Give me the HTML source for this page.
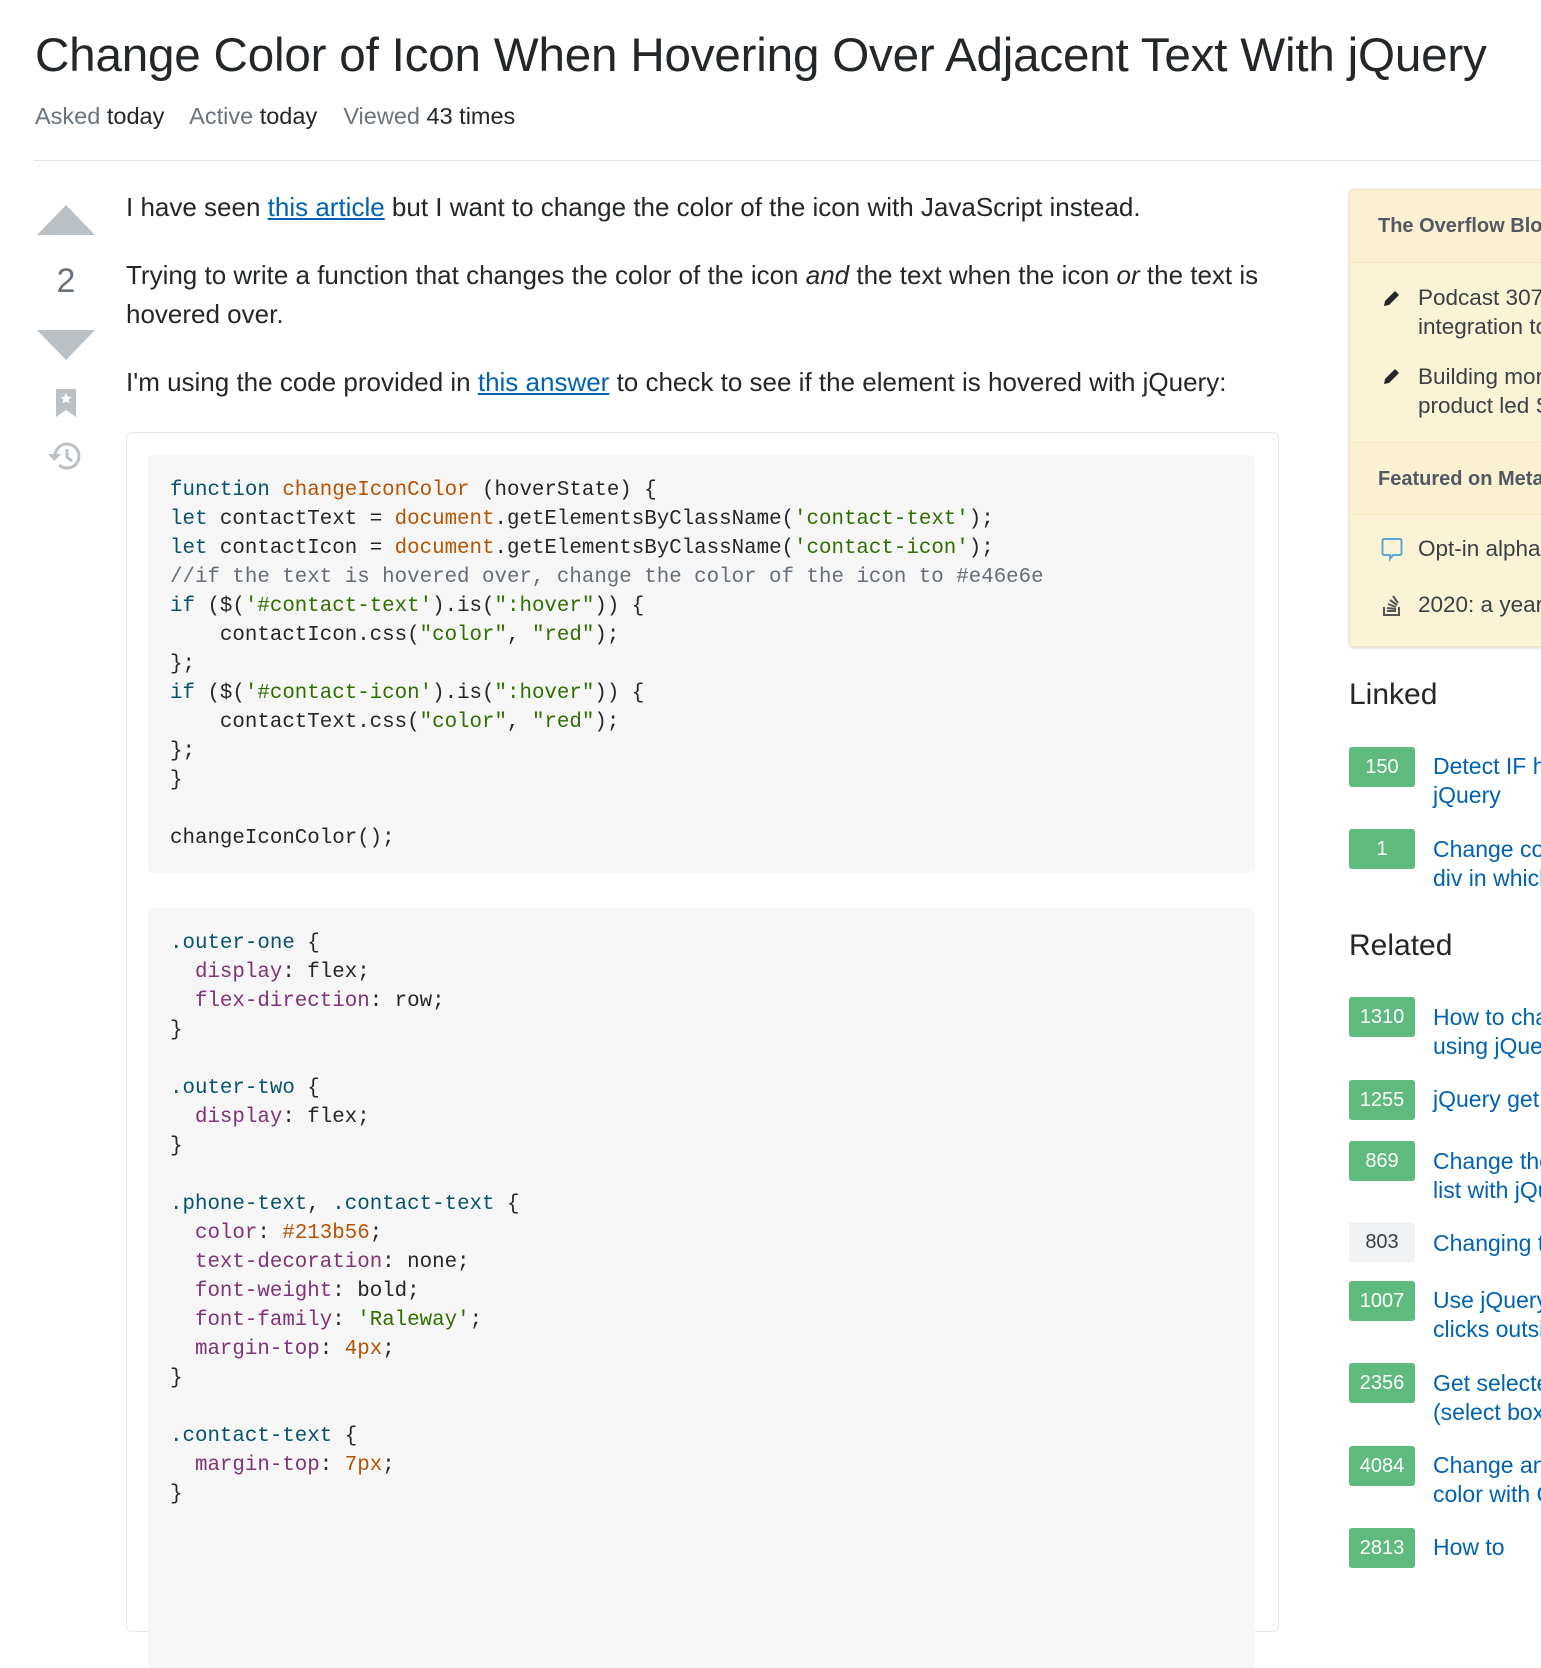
<!DOCTYPE html>
<html><head><meta charset="utf-8"><style>
*{margin:0;padding:0;box-sizing:border-box}
body{width:1541px;height:1541px;overflow:hidden;background:#fff;font-family:"Liberation Sans",Arial,sans-serif;color:#242729;position:relative}
.abs{position:absolute}
h1{position:absolute;left:35px;top:28px;font-size:47.6px;font-weight:normal;color:#242729;white-space:nowrap;letter-spacing:-0.2px}
.meta{left:35px;top:103px;font-size:23.5px;color:#242729;white-space:nowrap}
.meta span.l{color:#6a737c}
.hr{left:34px;top:160px;width:1507px;height:1px;background:#e4e6e8}
p{position:absolute;left:126px;font-size:26px;line-height:39px;color:#242729;white-space:nowrap}
a{color:#0062b0;text-decoration:underline}
.outer{left:126px;top:432px;width:1153px;height:1200px;border:1px solid #e4e6e8;border-radius:6px}
pre{position:absolute;left:148px;width:1107px;background:#f6f6f6;border-radius:6px;font-family:"Liberation Mono","DejaVu Sans Mono",monospace;font-size:20.8px;line-height:29px;padding:21px 22px;color:#242729}
.k{color:#07526e}.f{color:#b75301}.s{color:#2f6f00}.c{color:#656e77}.p{color:#803378}.n{color:#b75301}.sel{color:#07526e}
.side{left:1349px;top:189px;width:220px;height:458px;background:#fbf3d5;border:1px solid #f1e5bc;border-radius:4px;box-shadow:0 1px 3px rgba(0,0,0,.15)}
.sh{position:absolute;left:0;width:100%;background:#faf1d3;border-bottom:1px solid #f1e5bc;font-weight:bold;color:#525960;font-size:20px;padding-left:28px}
.si{position:absolute;left:68px;font-size:22.5px;line-height:29px;color:#3b4045;white-space:nowrap}
h2{position:absolute;left:1349px;font-size:30px;font-weight:normal;color:#242729}
.badge{position:absolute;left:1349px;width:66px;height:40px;border-radius:3px;background:#5eba7d;color:#fff;font-size:20px;text-align:center;line-height:40px}
.badge.g{background:#f1f2f3;color:#3b4045}
.lt{position:absolute;left:1433px;font-size:23px;line-height:29px;color:#0062b0;white-space:nowrap}
</style></head><body>
<h1>Change Color of Icon When Hovering Over Adjacent Text With jQuery</h1>
<div class="abs meta"><span class="l">Asked</span> today &nbsp;&nbsp; <span class="l">Active</span> today &nbsp;&nbsp; <span class="l">Viewed</span> 43 times</div>
<div class="abs hr"></div>

<svg class="abs" style="left:37px;top:205px" width="58" height="30"><polygon points="0,30 29,0 58,30" fill="#bbc0c4"/></svg>
<div class="abs" style="left:40px;top:262px;width:52px;text-align:center;font-size:34px;color:#6a737c">2</div>
<svg class="abs" style="left:37px;top:330px" width="58" height="30"><polygon points="0,0 58,0 29,30" fill="#bbc0c4"/></svg>
<svg class="abs" style="left:56px;top:389px" width="20" height="28"><path d="M0 0H20V28L10 21L0 28Z" fill="#bbc0c4"/><path d="M10 4l1.7 3.6 3.8.4-2.9 2.6.9 3.8L10 12.5l-3.5 1.9.9-3.8L4.5 8l3.8-.4z" fill="#fff"/></svg>
<svg class="abs" style="left:47px;top:440px" width="36" height="32" viewBox="0 0 36 32"><path d="M8 16a12 12 0 1 1 4 9" fill="none" stroke="#bbc0c4" stroke-width="3"/><path d="M1 14h13l-6.5 7z" fill="#bbc0c4"/><path d="M20 9v8l5 4" fill="none" stroke="#bbc0c4" stroke-width="3"/></svg>

<p style="top:188px">I have seen <a>this article</a> but I want to change the color of the icon with JavaScript instead.</p>
<p style="top:256px">Trying to write a function that changes the color of the icon <i>and</i> the text when the icon <i>or</i> the text is<br>hovered over.</p>
<p style="top:363px">I'm using the code provided in <a>this answer</a> to check to see if the element is hovered with jQuery:</p>

<div class="abs outer"></div>
<pre style="top:455px;height:418px"><span class="k">function</span> <span class="f">changeIconColor</span> (hoverState) {
<span class="k">let</span> contactText = <span class="f">document</span>.getElementsByClassName(<span class="s">'contact-text'</span>);
<span class="k">let</span> contactIcon = <span class="f">document</span>.getElementsByClassName(<span class="s">'contact-icon'</span>);
<span class="c">//if the text is hovered over, change the color of the icon to #e46e6e</span>
<span class="k">if</span> ($(<span class="s">'#contact-text'</span>).is(<span class="s">":hover"</span>)) {
    contactIcon.css(<span class="s">"color"</span>, <span class="s">"red"</span>);
};
<span class="k">if</span> ($(<span class="s">'#contact-icon'</span>).is(<span class="s">":hover"</span>)) {
    contactText.css(<span class="s">"color"</span>, <span class="s">"red"</span>);
};
}

changeIconColor();</pre>
<pre style="top:908px;height:760px"><span class="sel">.outer-one</span> {
  <span class="p">display</span>: flex;
  <span class="p">flex-direction</span>: row;
}

<span class="sel">.outer-two</span> {
  <span class="p">display</span>: flex;
}

<span class="sel">.phone-text</span>, <span class="sel">.contact-text</span> {
  <span class="p">color</span>: <span class="n">#213b56</span>;
  <span class="p">text-decoration</span>: none;
  <span class="p">font-weight</span>: bold;
  <span class="p">font-family</span>: <span class="s">'Raleway'</span>;
  <span class="p">margin-top</span>: <span class="n">4px</span>;
}

<span class="sel">.contact-text</span> {
  <span class="p">margin-top</span>: <span class="n">7px</span>;
}</pre>

<div class="abs side">
<div class="sh" style="top:0;height:73px;line-height:73px;border-radius:4px 4px 0 0">The Overflow Blog</div>
<svg class="abs" style="left:32px;top:98px" width="20" height="20" viewBox="0 0 20 20"><path d="M2 18l1-5L13 3l4 4L7 17z" fill="#242729"/></svg>
<div class="si" style="top:93px">Podcast 307: Owning<br>integration to</div>
<svg class="abs" style="left:32px;top:176px" width="20" height="20" viewBox="0 0 20 20"><path d="M2 18l1-5L13 3l4 4L7 17z" fill="#242729"/></svg>
<div class="si" style="top:172px">Building more<br>product led S</div>
<div class="sh" style="top:252px;height:73px;line-height:73px;border-top:1px solid #f1e5bc">Featured on Meta</div>
<svg class="abs" style="left:31px;top:347px" width="22" height="26" viewBox="0 0 22 26"><path d="M3 2h16a1.5 1.5 0 0 1 1.5 1.5v13A1.5 1.5 0 0 1 19 18h-7l-3 4v-4H3A1.5 1.5 0 0 1 1.5 16.5v-13A1.5 1.5 0 0 1 3 2z" fill="none" stroke="#5ea8d4" stroke-width="2"/></svg>
<div class="si" style="top:344px">Opt-in alpha</div>
<svg class="abs" style="left:32px;top:403px" width="20" height="24" viewBox="0 0 20 24"><path d="M2 14v8h15v-8" fill="none" stroke="#555" stroke-width="2"/><path d="M5 18h9M5 15l9 1M6 11l8 3M8 7l7 5M11 3l5 7" stroke="#555" stroke-width="2"/></svg>
<div class="si" style="top:400px">2020: a year</div>
</div>

<h2 style="top:678px">Linked</h2>
<div class="badge" style="top:747px">150</div><div class="lt" style="top:752px">Detect IF hovering<br>jQuery</div>
<div class="badge" style="top:829px">1</div><div class="lt" style="top:835px">Change color<br>div in which</div>
<h2 style="top:929px">Related</h2>
<div class="badge" style="top:997px">1310</div><div class="lt" style="top:1003px">How to change<br>using jQuery</div>
<div class="badge" style="top:1080px">1255</div><div class="lt" style="top:1085px">jQuery get</div>
<div class="badge" style="top:1141px">869</div><div class="lt" style="top:1147px">Change the<br>list with jQuery</div>
<div class="badge g" style="top:1222px">803</div><div class="lt" style="top:1229px">Changing the</div>
<div class="badge" style="top:1281px">1007</div><div class="lt" style="top:1286px">Use jQuery<br>clicks outside</div>
<div class="badge" style="top:1363px">2356</div><div class="lt" style="top:1369px">Get selected<br>(select box)</div>
<div class="badge" style="top:1446px">4084</div><div class="lt" style="top:1451px">Change an<br>color with C</div>
<div class="badge" style="top:1528px">2813</div><div class="lt" style="top:1533px">How to</div>
</body></html>
